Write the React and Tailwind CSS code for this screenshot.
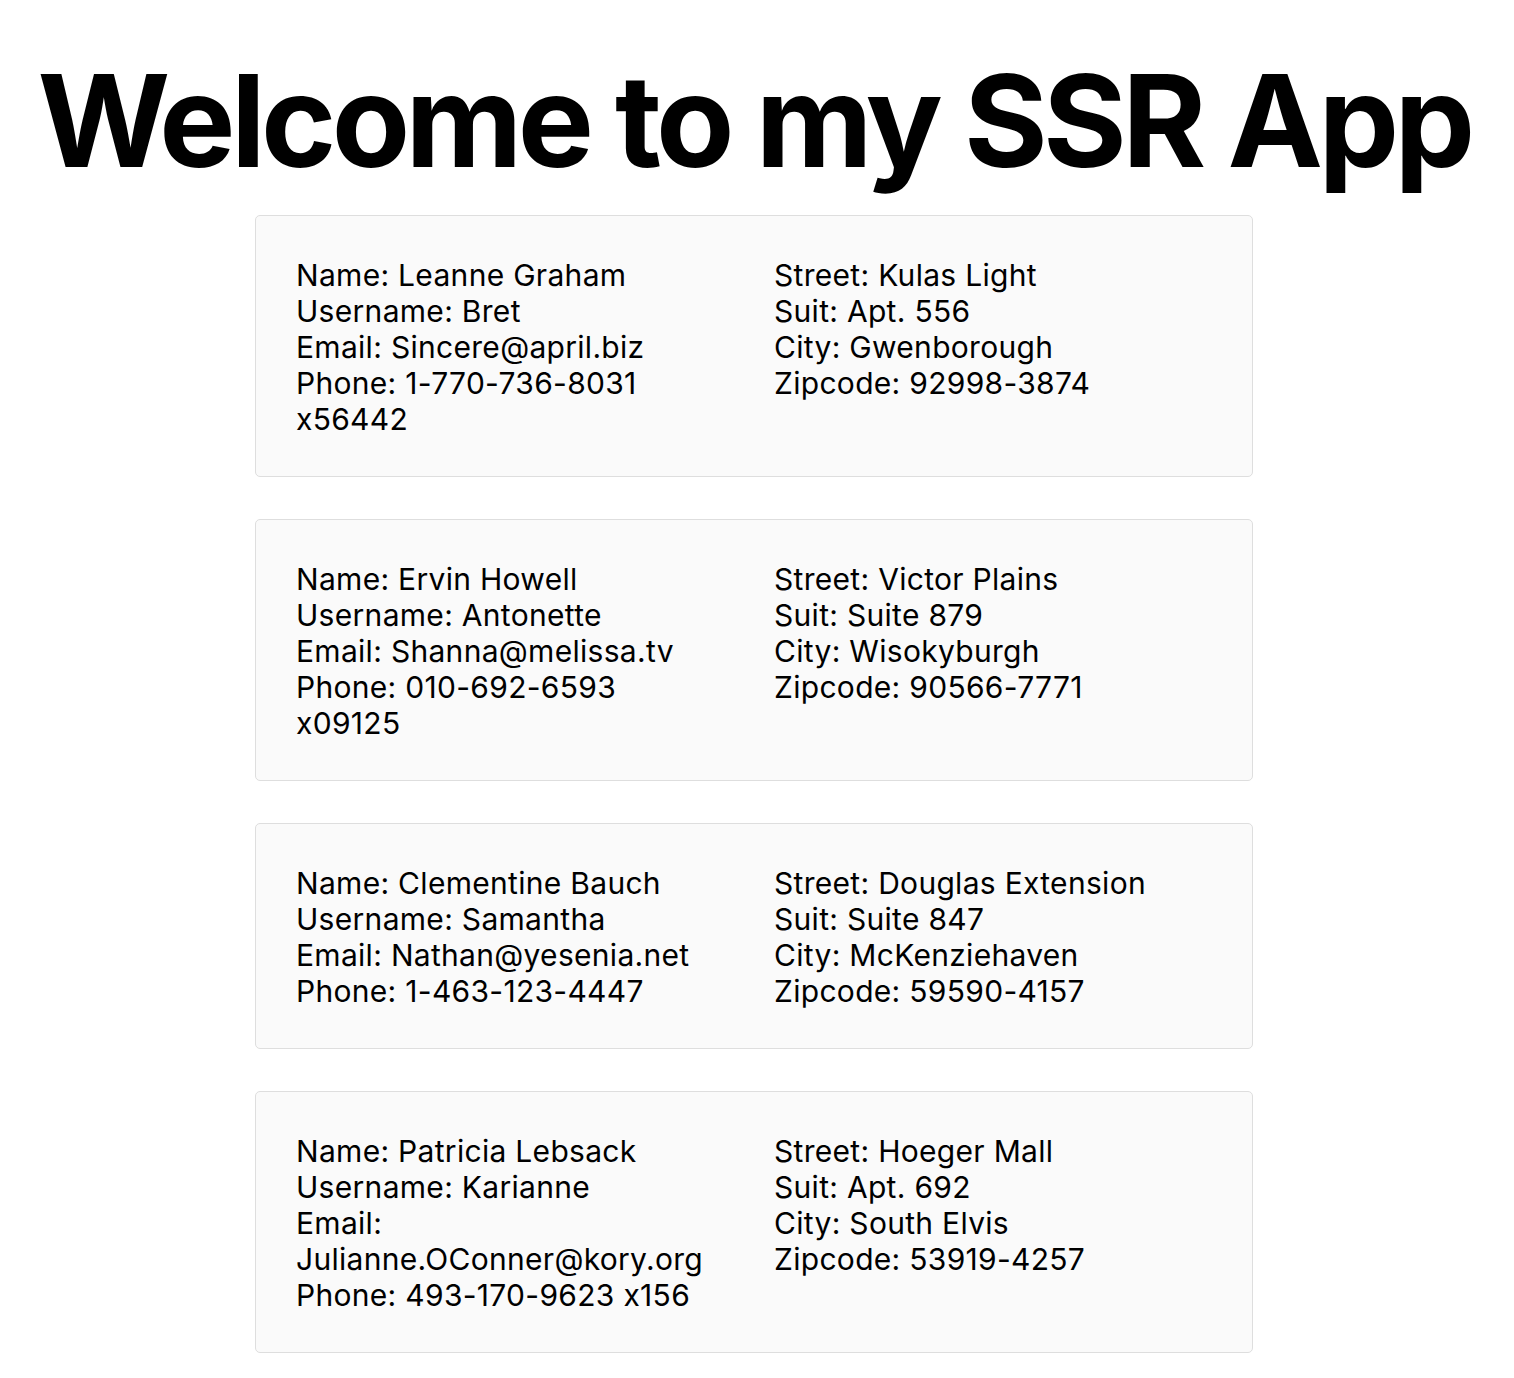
const users = [
  {
    name: 'Leanne Graham', username: 'Bret', email: 'Sincere@april.biz', phone: '1-770-736-8031 x56442',
    street: 'Kulas Light', suite: 'Apt. 556', city: 'Gwenborough', zipcode: '92998-3874',
  },
  {
    name: 'Ervin Howell', username: 'Antonette', email: 'Shanna@melissa.tv', phone: '010-692-6593 x09125',
    street: 'Victor Plains', suite: 'Suite 879', city: 'Wisokyburgh', zipcode: '90566-7771',
  },
  {
    name: 'Clementine Bauch', username: 'Samantha', email: 'Nathan@yesenia.net', phone: '1-463-123-4447',
    street: 'Douglas Extension', suite: 'Suite 847', city: 'McKenziehaven', zipcode: '59590-4157',
  },
  {
    name: 'Patricia Lebsack', username: 'Karianne', email: 'Julianne.OConner@kory.org', phone: '493-170-9623 x156',
    street: 'Hoeger Mall', suite: 'Apt. 692', city: 'South Elvis', zipcode: '53919-4257',
  },
]

function UserCard({ user }) {
  return (
    <div className="w-[998px] mx-auto mb-[42px] bg-[#fafafa] border border-[#dedede] rounded-[5px] px-10 pt-[41px] pb-[39px] grid grid-cols-[433px_1fr] gap-[45px] text-[30px] leading-[36px] tracking-[0.01em] text-black">
      <div className="break-words">
        <p>Name: {user.name}</p>
        <p>Username: {user.username}</p>
        <p>Email: {user.email}</p>
        <p>Phone: {user.phone}</p>
      </div>
      <div>
        <p>Street: {user.street}</p>
        <p>Suit: {user.suite}</p>
        <p>City: {user.city}</p>
        <p>Zipcode: {user.zipcode}</p>
      </div>
    </div>
  )
}

export default function App() {
  return (
    <div className="min-h-screen bg-white font-['Inter','Liberation_Sans',sans-serif] [font-feature-settings:'calt'_0]">
      <div className="w-[1508px]">
        <h1 className="text-center text-[128px] leading-none font-bold tracking-[-0.036em] text-black pt-[57px] pb-[30px]">
          Welcome to my SSR App
        </h1>
        {users.map((u) => (
          <UserCard key={u.name} user={u} />
        ))}
      </div>
    </div>
  )
}
